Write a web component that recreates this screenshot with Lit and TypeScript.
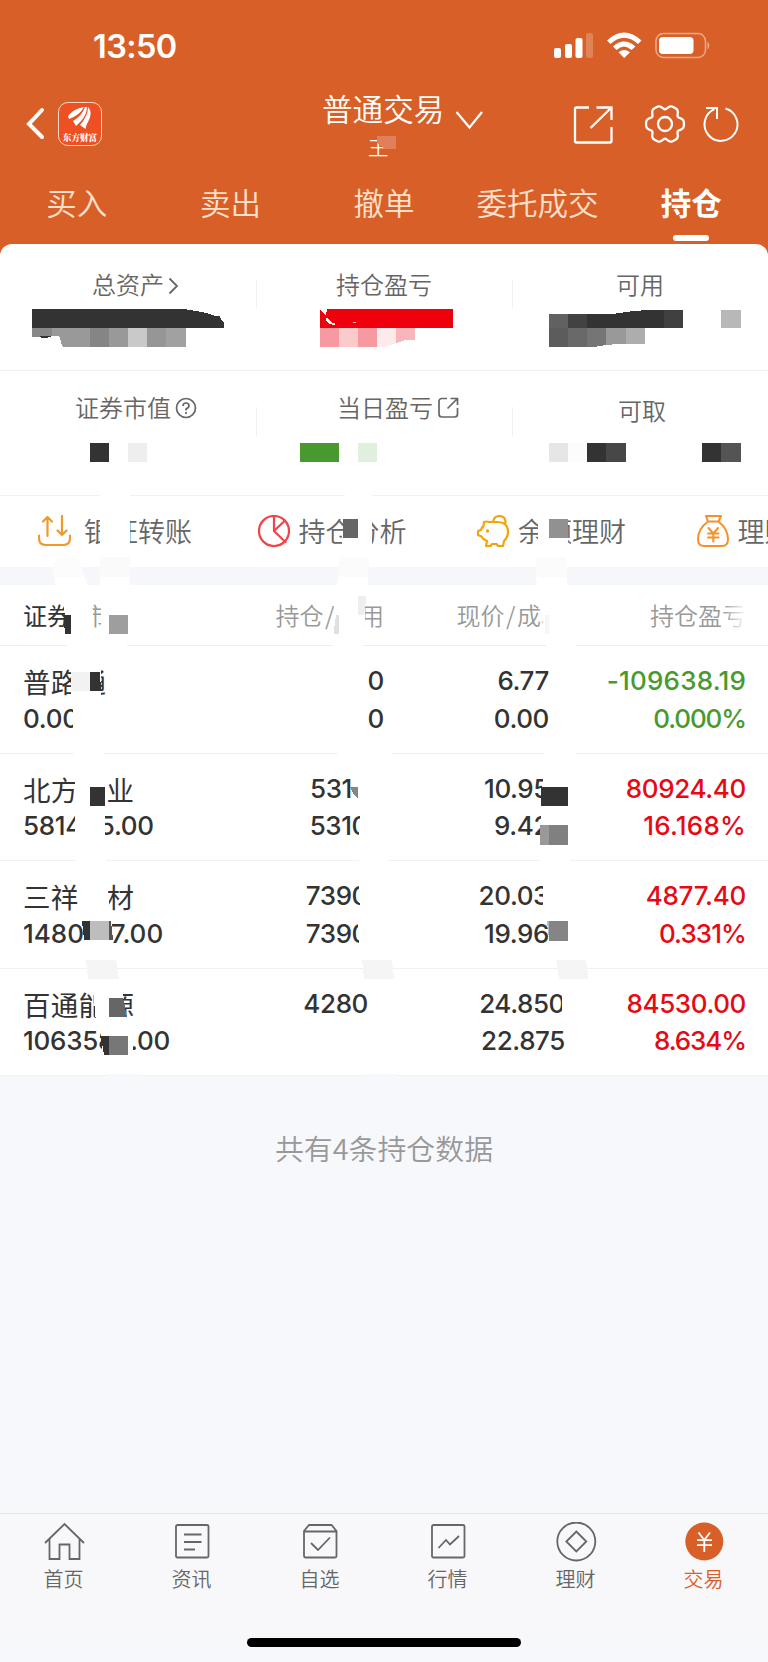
import { LitElement, html, svg, css } from "lit";
import { customElement } from "lit/decorators.js";

const gearPath = (() => {
  const pts: string[] = [];
  for (let i = 0; i < 120; i++) {
    const t = (i / 120) * Math.PI * 2;
    const r = 17.4 + 2.1 * Math.cos(6 * t) - 0.6 * Math.cos(12 * t);
    pts.push(`${(21 + r * Math.cos(t)).toFixed(2)} ${(21 + r * Math.sin(t)).toFixed(2)}`);
  }
  return "M" + pts.join("L") + "Z";
})();

/* Privacy mosaic: [points, fill] */
const mosaic: [string, string][] = [
  ["377,136 396,136 396,149 385,149 377,143", "#e0805a"],
  // total assets
  ["32,309 184,309 196,311 206,313 215,316 220,316 221,319 224,323 224,328 32,328", "#333"],
  ["32,328 52,328 52,336 32,337", "#888"],
  ["52,328 90,328 90,347 63,347 61,343 60,337 58,335.5 52,336", "#999"],
  ["90,328 109,328 109,347 90,347", "#858585"],
  ["109,328 128,328 128,347 109,347", "#999"],
  ["128,328 147,328 147,347 128,347", "#c9c9c9"],
  ["147,328 166,328 166,347 147,347", "#969696"],
  ["166,328 185.5,328 185.5,347 166,347", "#a1a1a1"],
  ["39,336 50,335.5 51,336.5 47,338 42,338", "#333"],
  // position profit
  ["319.5,310 321,310 326,316 327,309 453,309 453,328 319.5,328", "#ee000c"],
  ["326,318 329,319 331,322 336,324 334,325 329,324 326,321", "#fff"],
  ["352,322 356,322 355,323.5", "#fbb"],
  ["319.5,328 339,328 339,347 319.5,347", "#f799a0"],
  ["339,328 358,328 358,347 339,347", "#fbcacd"],
  ["358,328 377,328 377,347 358,347", "#f799a0"],
  ["377,328 396,328 396,343 384,347 377,347", "#fdeaeb"],
  ["396,328 415,328 415,340 406,340 396,343", "#f9b6ba"],
  ["446,337 449,336.5 449,337.5", "#f799a0"],
  // available
  ["549,314 568,314 568,328 549,328", "#616161"],
  ["568,314 587,314 587,328 568,328", "#424242"],
  ["587,314 613,314 630,311.5 646,310 664,310 664,328 587,328", "#333"],
  ["664,310 683,310 683,328 664,328", "#404040"],
  ["549,328 568,328 568,347 549,347", "#5c5c5c"],
  ["568,328 587,328 587,347 568,347", "#696969"],
  ["587,328 606,328 606,345 594,347 587,347", "#757575"],
  ["606,328 625.5,328 625.5,344 612,344.5 606,345", "#999"],
  ["625.5,328 645,328 645,343.5 625.5,344", "#adadad"],
  ["721,310 740.5,310 740.5,328 721,328", "#b8b8b8"],
  // second summary row
  ["90,443 109,443 109,462 90,462", "#333"],
  ["128,443 147,443 147,462 128,462", "#eee"],
  ["300,443 339,443 339,462 300,462", "#489a2f"],
  ["358,443 377,443 377,462 358,462", "#e1f0de"],
  ["549,443 568,443 568,462 549,462", "#e6e6e6"],
  ["568,443 587,443 587,462 568,462", "#fcfcfc"],
  ["587,443 606,443 606,462 587,462", "#333"],
  ["606,443 626,443 626,462 606,462", "#474747"],
  ["702,443 721,443 721,462 702,462", "#333"],
  ["721,443 740.5,443 740.5,462 721,462", "#545454"],
  // shortcuts
  ["100,494 130,494 130,557 100,557", "#fff"],
  ["345,494 372,494 372,557 342,557 342,538 345,519", "#fff"],
  ["343,519 358,519 358,538 343,538", "#666"],
  ["538,512 568,512 568,552 538,552", "#fff"],
  ["549,519 568,519 568,538 549,538", "#919191"],
  // band
  ["54,577 52.5,567 56,560 61,557 77,557 81,565 85,577", "#fcfcfc"],
  ["54,577 85,577 88,586 56,586", "#fff"],
  ["100,557 130,557 130,577 100,577", "#fafafa"],
  ["100,577 130,577 130,586 100,586", "#fff"],
  ["340,557 369,557 368,577 338,577", "#fbfbfb"],
  ["338,577 368,577 367.5,586 337,586", "#fff"],
  ["536,557 566,557 567,577 536,577", "#fbfbfb"],
  ["536,577 567,577 567.5,586 537,586", "#fff"],
  // table head
  ["63,600 92,600 94,634 67,634", "#fff"],
  ["63.5,615 71,615 71,634 65,634", "#333"],
  ["101,600 132,600 132,634 101,634", "#fff"],
  ["109,615 128,615 128,634 109,634", "#9e9e9e"],
  ["334,596 366,596 364,634 334,634", "#fff"],
  ["336,615 339,615 339,634 333.5,634", "#e0e0e0"],
  ["358,596 366.5,596 364,615 358,615", "#eee"],
  ["542,600 573,600 573,634 543,634", "#fff"],
  ["545,615 549,615 549,634 545,634", "#f6f6f6"],
  ["67,643 127,643 127,648 67,648", "#fff"],
  ["333,643 363,643 363,648 333,648", "#fff"],
  ["546,643 576,643 576,648 546,648", "#fff"],
  // row 1
  ["71,665 101,665 101,698 71,698", "#fff"],
  ["71,672 90,672 90,691 71,691", "#f2f2f2"],
  ["90,672 100,672 101,691 90,691", "#333"],
  ["73,703 90,703 90,733 73,733", "#fff"],
  ["74,751 104,751 104,756 74,756", "#fff"],
  ["338,751 392,751 392,756 338,756", "#fff"],
  ["544,751 575,751 575,756 544,756", "#fff"],
  // row 2
  ["75,770 104.5,770 105,846 75,846", "#fff"],
  ["90,787 105,787 105,806 90,806", "#333"],
  ["350,787 358,787 358,798 354,795", "#858585"],
  ["361,810 380,810 380,846 359,846 359,830", "#fff"],
  ["543,770 570,770 570,846 540,846", "#fff"],
  ["541.5,787 568,787 568,806 541,806", "#333"],
  ["540.5,825 549,825 549,844.5 540,844.5", "#999"],
  ["549,825 568,825 568,844.5 549,844.5", "#808080"],
  ["76,859 106,859 106,864 76,864", "#fff"],
  ["359,859 389,859 389,864 359,864", "#fff"],
  ["540,859 570,859 570,864 540,864", "#fff"],
  // row 3
  ["78,880 108,880 109,914 79,914", "#fff"],
  ["82,916 111,916 113,946 84,946", "#fff"],
  ["82,921 90,921 90,940 84,940", "#333"],
  ["90,921 109,921 109,940 90,940", "#bdbdbd"],
  ["109,921 111,921 113,940 109,940", "#555"],
  ["358.5,880 375,880 375,946 360,946 357,932 360,914", "#fff"],
  ["543,880 570,880 570,912 543,912", "#fff"],
  ["547,921 549,921 549,940", "#bbb"],
  ["549,921 568,921 568,940.5 549,940.5", "#858585"],
  ["86,960 116,960 119,979 88,979", "#f5f5f5"],
  ["362,960 392,960 394,979 364,979", "#f5f5f5"],
  ["556,960 586,960 588.5,979 559,979", "#f5f5f5"],
  // row 4
  ["93,990 122,990 127,1022 96,1022", "#fff"],
  ["109,998 123,998 127,1017 109,1017", "#666"],
  ["100,1026 131,1026 134,1056 103,1056", "#fff"],
  ["100,1036 109,1036 109,1055 104,1055 103,1048", "#333"],
  ["109,1036 128,1036 128,1055 109,1055", "#777"],
  ["561.5,990 575,990 575,1022 561.5,1022", "#fff"],
  ["107,1074 138,1074 138,1078 107,1078", "#f6f8fb"],
  ["367,1074 397,1074 397,1078 367,1078", "#f6f8fb"],
];

/* *Cut: trailing digits hidden; *Track: letter spacing in px */
interface Holding {
  name: string; value: string; valueTrack: number;
  qty: string; avail: string; qtyCut: number; availCut: number;
  price: string; cost: string; cut: number;
  profit: string; profitTrack: number; rate: string; rateTrack: number; tone: string;
}

const holdings: Holding[] = [
  { name: "普路通", value: "0.00", valueTrack: -0.3, qty: "0", avail: "0", qtyCut: 0, availCut: 0, price: "6.77", cost: "0.00", cut: 1, profit: "-109638.19", profitTrack: 0.2, rate: "0.000%", rateTrack: -1.1, tone: "down" },
  { name: "北方铜业", value: "581445.00", valueTrack: -0.3, qty: "531", avail: "5310", qtyCut: 2, availCut: 1, price: "10.95", cost: "9.42", cut: 1, profit: "80924.40", profitTrack: -0.35, rate: "16.168%", rateTrack: 0.2, tone: "up" },
  { name: "三祥新材", value: "1480217.00", valueTrack: 0, qty: "7390", avail: "7390", qtyCut: 1, availCut: 1, price: "20.03", cost: "19.96", cut: 1, profit: "4877.40", profitTrack: -0.25, rate: "0.331%", rateTrack: -0.9, tone: "up" },
  { name: "百通能源", value: "1063580.00", valueTrack: -0.25, qty: "4280", avail: "", qtyCut: 1, availCut: 0, price: "24.850", cost: "22.875", cut: 0, profit: "84530.00", profitTrack: -0.4, rate: "8.634%", rateTrack: -1.1, tone: "up" },
];

const shortcuts = [
  { label: "银证转账", cls: "first", icon: svg`<g stroke="#f09a2a" stroke-width="2.2"><path d="M9.5 21V2M5 6.5L9.5 2L14 6.5M24 1V20M19.500 15.500L24 20L28.500 15.500"/><path d="M1 20.500V23Q1 30 8 30H25Q32 30 32 23V20.500"/></g>` },
  { label: "持仓分析", cls: "", icon: svg`<g stroke="#f0434a" stroke-width="2.2"><circle cx="16" cy="16" r="15"/><path d="M16 1V16L27.500 27M16 16L27 5.500"/></g>` },
  { label: "余额理财", cls: "", icon: svg`<g stroke="#f5a408" stroke-width="2.200"><path d="M7 7L6.500 11Q4.500 12.500 4 15L1 16V20L4.500 21.500Q6 24.500 10 26L9 31H13.500L15 29H19.500L21 31H26L27 26Q31 22 31 17Q31 11 27 8.500Q24 7 20 7H12Q9.500 6 7 7Z"/><path d="M16 7Q17 1 22.500 1Q28.500 1.500 28.500 7.500L27.500 8.500"/></g><circle cx="10.500" cy="16" r="1.700" fill="#f5a408"/>` },
  { label: "理财", cls: "", icon: svg`<g stroke="#f79028" stroke-width="2"><path d="M9 1H24L21.500 6.500H11ZM11 6.500Q1 14 1 24Q1 31 7 31H25Q31 31 31 24Q31 14 21.500 6.500"/><path d="M11.500 13L16.300 18.500L21 13M16.300 18.500V26.500M11 18.500H21.500M11 22.500H21.500"/></g>` },
];

const tabs = [
  { label: "首页", icon: svg`<path d="M1 21L20.500 2L40 21M5.500 17V37H15.500V22.500H25.500V37H35.500V17"/>` },
  { label: "资讯", icon: svg`<rect x="4" y="3" width="32.500" height="32.500" rx="1.500"/><path d="M12 12.500H29.500M12 20H29.500M12 27.500H23"/>` },
  { label: "自选", icon: svg`<path d="M4 9V34Q4 35.500 5.500 35.500H35Q36.500 35.500 36.500 34V9L31.500 3H9ZM4 9.500H36.500M11 21L18 28L30 15.500"/>` },
  { label: "行情", icon: svg`<rect x="4" y="3" width="32.500" height="32.500" rx="1.500"/><path d="M10.500 26L18 18L22 22.500L31 14"/>` },
  { label: "理财", icon: svg`<circle cx="20.300" cy="19.500" r="19"/><path d="M20.300 9.500L30.300 19.500L20.300 29.500L10.300 19.500Z"/>` },
  { label: "交易", active: true, icon: svg`<circle cx="20.300" cy="19.500" r="19" fill="#d86028" stroke="none"/><path stroke="#fff" stroke-width="1.800" d="M14.500 10.500L20.300 18L26 10.500M20.300 18V30M13 18.200H28M13 23.200H28"/>` },
];

@customElement("app-root")
export class AppRoot extends LitElement {
  static styles = css`
    :host { display: block; position: relative; width: 768px; height: 1662px; overflow: hidden; background: #f7f8fb;
      font-family: "Noto Sans CJK SC", sans-serif; font-weight: 350; color: #333; }
    * { box-sizing: border-box; }
    svg { display: block; fill: none; flex: none; }
    .head { background: #d86028; height: 256px; color: #fff; }
    .status { height: 92px; padding: 27px 56px 0 93px; display: flex; justify-content: space-between; align-items: flex-start; }
    .status svg { margin-top: 4px; }
    .clock { font: 600 32.500px/39px Inter, sans-serif; letter-spacing: -0.600px; }
    .nav { height: 86px; display: grid; grid-template-columns: 322px 1fr 196px; }
    .left { display: flex; padding: 10px 0 0 26px; gap: 13px; }
    .logo { width: 44px; height: 44px; border-radius: 10px; border: 1px solid #ffd9c4; background: #ee4f23; display: flex; flex-direction: column; align-items: center; }
    .logo b { font: 900 8.6px/11px "Noto Serif CJK SC", "Noto Sans CJK SC"; white-space: nowrap; }
    .title { display: flex; gap: 11px; font-size: 30.600px; line-height: 34px; white-space: nowrap; margin-top: -1.500px; }
    .title svg { margin-top: 19px; }
    .owner { font-size: 20.500px; line-height: 22px; padding-left: 46px; margin-top: 6px; }
    .tools { display: flex; align-items: flex-start; padding-top: 11px; }
    .tools svg:nth-child(2) { margin-left: 30px; }
    .tools svg:nth-child(3) { margin-left: 15px; }
    .menu { display: grid; grid-template-columns: repeat(5, 1fr); height: 66px; }
    .menu span { display: flex; flex-direction: column; align-items: center; font-size: 30.5px; line-height: 48px; color: #fde0cb; }
    .menu .on { font-weight: 700; color: #fff; }
    .menu .on::after { content: ""; width: 36px; height: 6px; border-radius: 3px; background: #fff; margin-top: 9px; }
    .card { margin-top: -12px; background: #fff; border-radius: 12px 12px 0 0; height: 323px; }
    .sum { display: grid; grid-template-columns: repeat(3, 256px); height: 126.500px; border-bottom: 1px solid #f1f1f1; }
    .sum + .sum { height: 125px; }
    .cell { display: flex; justify-content: center; font-size: 24px; line-height: 32px; padding-top: 24px; color: #666; position: relative; }
    .sum + .sum .cell { padding-top: 20px; }
    .cell + .cell::before { content: ""; width: 1px; height: 29px; background: #f0f0f0; position: absolute; left: 0; top: 36px; }
    .cell svg { margin: 10px -15px 0 4px; }
    .assets svg { margin-top: 9px; }
    .market { padding-right: 8px; }
    .market svg { margin: 6px -24px 0 4px; }
    .today svg { margin: 6px -28px 0 5px; }
    .sum + .sum .low { padding-top: 23px; padding-left: 4px; }
    .quick { display: flex; height: 71px; padding: 18px 0 0 38px; overflow: hidden; }
    .quick div { flex: 0 0 219.500px; display: flex; gap: 8px; font-size: 27px; line-height: 34px; color: #666; white-space: nowrap; }
    .quick .first { gap: 13px; }
    .quick svg { margin-top: 1px; }
    .band { height: 18px; background: #f6f7fa; }
    .grid { display: grid; grid-template-columns: 177px 184px 181px 181px; padding-left: 23px; padding-right: 22px; }
    .thead { height: 61px; padding-top: 12px; background: #fff; border-bottom: 1px solid #eee; font-size: 24px; line-height: 35px; color: #999; }
    .grid > div:not(:first-child) { text-align: right; white-space: nowrap; }
    .thead b { font-weight: 400; color: #333; }
    .thead i { font-style: normal; margin: 0 1.500px; }
    .thead div { white-space: nowrap; }
    .fade { background: linear-gradient(90deg, #999, #fafafa); -webkit-background-clip: text; background-clip: text; color: transparent; }
    .row { height: 107.600px; padding-top: 16px; background: #fff; border-bottom: 1px solid #f1f1f1; font: 500 26px/37.500px Inter, sans-serif; letter-spacing: -0.400px; }
    .row p { margin: 0; height: 37.500px; white-space: nowrap; }
    .row .name { font: 400 27.500px/39px "Noto Sans CJK SC"; letter-spacing: 0.300px; }
    .up { color: #e60a14; }
    .down { color: #489a2f; }
    .count { text-align: center; font-size: 28.900px; line-height: 40px; color: #999; margin-top: 51px; height: 386px; }
    .tabs { display: grid; grid-template-columns: repeat(6, 128px); border-top: 1px solid #e4e5e8; height: 125px; padding-top: 8px; background: #f8f8fb; }
    .tabs div { display: flex; flex-direction: column; align-items: center; gap: 2px; font-size: 20px; line-height: 30px; color: #666; }
    .tabs span { padding-right: 1px; }
    .tabs .on { color: #d86028; }
    .bar { width: 274px; height: 9px; border-radius: 5px; background: #000; margin: 0 auto; }
    .mosaic { position: absolute; left: 0; top: 0; }
  `;

  private gap(n: number) {
    return `padding-right:${n * 16}px`;
  }

  private track(n: number) {
    return `letter-spacing:${n}px`;
  }

  render() {
    return html`
      <div class="head">
        <div class="status">
          <span class="clock">13:50</span>
          <svg width="158" height="28" viewBox="0 0 158 28">
            <g fill="#fff">
              <rect x="0" y="17" width="7" height="10" rx="2"/><rect x="11" y="13" width="7" height="14" rx="2"/>
              <rect x="21.500" y="7" width="7" height="20" rx="2"/><rect x="32" y="2" width="7" height="25" rx="2" opacity=".22"/>
              <path d="M53 9.500Q70 -6.500 87.500 9.500L84 13Q70 .5 56.500 13ZM59 15.500Q70 5.500 81.500 15.500L77.500 19Q70 12 62.500 19ZM64.500 21.300Q70 16.500 76 21.300L70.200 27Z"/>
              <rect x="105" y="6" width="34.500" height="17" rx="4"/><path d="M153.500 10.500Q157 14.500 153.500 18.500Z" opacity=".5"/>
            </g>
            <rect x="102" y="2.500" width="49.500" height="24" rx="7.500" stroke="#fff" stroke-width="1.600" opacity=".45"/>
          </svg>
        </div>
        <div class="nav">
          <div class="left">
            <svg width="19" height="44" viewBox="0 0 19 44"><path d="M16 8L3 22L16 35" stroke="#fff" stroke-width="4" stroke-linecap="round"/></svg>
            <div class="logo">
              <svg width="42" height="29" viewBox="0 0 42 29"><path fill="#fff" d="M9 13Q14 6 25 4Q21 12 10 16ZM14 18Q23 13 26 4L28 4Q28 14 17 23ZM21 22Q29 13 29 4Q34 9 29.500 18Q27 22 26.500 26Z"/></svg>
              <b>东方财富</b>
            </div>
          </div>
          <div>
            <div class="title">普通交易
              <svg width="28" height="20" viewBox="0 0 28 20"><path d="M1.500 2L14.500 17.500L27 2" stroke="#fff" stroke-width="2.200"/></svg>
            </div>
            <div class="owner">王</div>
          </div>
          <div class="tools">
            <svg width="42" height="42" viewBox="0 0 42 42" stroke="#fff" stroke-width="2.300"><path d="M17 4.500H4.500Q3 4.500 3 6V38Q3 39.500 4.500 39.500H38Q39.500 39.500 39.500 38V24M24.500 4.500H39.500V17M39 5L18.500 25"/></svg>
            <svg width="42" height="42" viewBox="0 0 42 42" stroke="#fff" stroke-width="2.300"><path d=${gearPath}/><circle cx="21" cy="21" r="7"/></svg>
            <svg width="42" height="42" viewBox="0 0 42 42" stroke="#fff" stroke-width="2"><path d="M24.500 5.500A16.500 16.500 0 1 1 13.500 6.200M5 5H16V16"/></svg>
          </div>
        </div>
        <div class="menu"><span>买入</span><span>卖出</span><span>撤单</span><span>委托成交</span><span class="on">持仓</span></div>
      </div>
      <div class="card">
        <div class="sum">
          <div class="cell assets">总资产<svg width="11" height="18" viewBox="0 0 11 18"><path d="M1.500 1.500L9 9L1.500 16.500" stroke="#666" stroke-width="1.800"/></svg></div>
          <div class="cell">持仓盈亏</div>
          <div class="cell">可用</div>
        </div>
        <div class="sum">
          <div class="cell market">证券市值<svg width="22" height="22" viewBox="0 0 22 22" stroke="#666" stroke-width="1.700"><circle cx="11" cy="11" r="9.500"/><path d="M8 9Q8 6 11 6Q14 6 14 8.700Q14 10.500 11 12V13.500M11 15V17"/></svg></div>
          <div class="cell today">当日盈亏<svg width="21" height="22" viewBox="0 0 21 22" stroke="#666" stroke-width="1.700"><path d="M9 1.500H4Q1 1.500 1 4.500V17Q1 20 4 20H16.500Q19.500 20 19.500 17V11M12.500 1.500H19.500V8M19 2L9.500 11.500"/></svg></div>
          <div class="cell low">可取</div>
        </div>
        <div class="quick">
          ${shortcuts.map((s) => html`<div class=${s.cls}><svg width="33" height="32" viewBox="0 0 33 32" stroke-linecap="round" stroke-linejoin="round">${s.icon}</svg>${s.label}</div>`)}
        </div>
      </div>
      <div class="band"></div>
      <div class="grid thead">
        <div><b>证券</b><i>/</i>市</div><div>持仓<i>/</i>可用</div><div>现价<i>/</i>成本</div><div>持仓盈<span class="fade">亏</span></div>
      </div>
      ${holdings.map((h) => html`
        <div class="grid row">
          <div><p class="name">${h.name}</p><p style=${this.track(h.valueTrack)}>${h.value}</p></div>
          <div><p style=${this.gap(h.qtyCut)}>${h.qty}</p><p style=${this.gap(h.availCut)}>${h.avail}</p></div>
          <div><p style=${this.gap(h.cut)}>${h.price}</p><p style=${this.gap(h.cut)}>${h.cost}</p></div>
          <div class=${h.tone}><p style=${this.track(h.profitTrack)}>${h.profit}</p><p style=${this.track(h.rateTrack)}>${h.rate}</p></div>
        </div>`)}
      <div class="count">共有4条持仓数据</div>
      <div class="tabs">
        ${tabs.map((t) => html`<div class=${t.active ? "on" : ""}><svg width="41" height="40" viewBox="0 0 41 40" stroke="#666" stroke-width="1.800">${t.icon}</svg><span>${t.label}</span></div>`)}
      </div>
      <div class="bar"></div>
      <svg class="mosaic" width="768" height="1100" viewBox="0 0 768 1100">
        ${mosaic.map(([p, f]) => svg`<polygon points=${p} fill=${f} shape-rendering="crispEdges"/>`)}
      </svg>
    `;
  }
}
